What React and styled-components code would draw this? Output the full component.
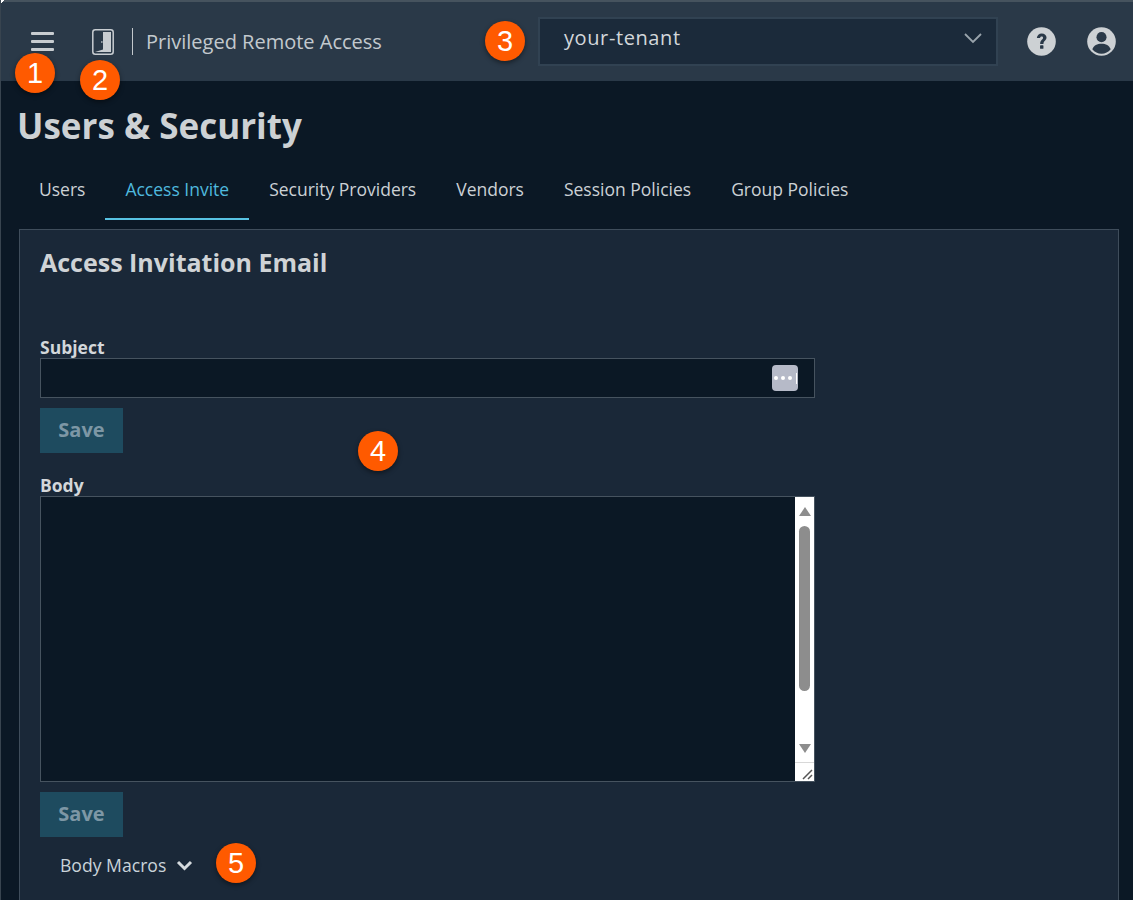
import React from "react";
import styled, { createGlobalStyle } from "styled-components";

const Global = createGlobalStyle`
  html, body { margin: 0; padding: 0; height: 900px; overflow: hidden; background: #0b1826; }
  * { box-sizing: border-box; }
`;

const Page = styled.div`
  position: relative;
  width: 1133px;
  height: 900px;
  overflow: hidden;
  background: #0b1825;
  border-left: 1px solid #38444f;
  font-family: "Open Sans", "Liberation Sans", sans-serif;
  color: #ced3d6;
  &::before {
    content: "";
    position: absolute;
    left: -1px;
    top: 0;
    width: 5px;
    height: 5px;
    background: linear-gradient(135deg, #fff 45%, transparent 50%);
  }
`;

const Header = styled.header`
  display: flex;
  align-items: center;
  height: 81px;
  background: #2a3948;
  border-top: 2px solid #46535e;
  padding-left: 30px;
`;

const MenuButton = styled.div`
  display: flex;
  flex-direction: column;
  gap: 5px;
  width: 23px;
  margin-top: -1px;
  margin-right: 38px;
  span { display: block; height: 3px; background: #c8cdd1; border-radius: 1px; }
`;

const Divider = styled.div`
  width: 1px;
  height: 27px;
  background: #c3c8cc;
  margin: 0 13px 0 18px;
`;

const ProductName = styled.div`
  font-size: 20px;
  color: #c3c9ce;
  width: 392px;
  white-space: nowrap;
`;

const TenantSelect = styled.div`
  display: flex;
  align-items: center;
  justify-content: space-between;
  width: 460px;
  height: 49px;
  margin-top: -1px;
  margin-right: 29px;
  padding: 0 13px 7px 24px;
  background: #1b2a3a;
  border: 2px solid #314252;
  font-size: 20px;
  letter-spacing: 0.6px;
  color: #d3d7da;
`;

const HeaderIcon = styled.svg`
  display: block;
  flex: none;
  margin-right: ${(p) => p.$gap || 0}px;
  margin-top: -1px;
`;

const DoorIcon = styled.svg`
  display: block;
  flex: none;
`;

const Title = styled.h1`
  margin: 0;
  padding: 20px 0 0 16px;
  font-size: 35px;
  line-height: 50px;
  font-weight: 700;
  color: #cdd1d4;
`;

const Tabs = styled.nav`
  display: flex;
  margin: 12px 0 9px 18px;
`;

const Tab = styled.div`
  height: 57px;
  padding: 0 20px 3px;
  display: flex;
  align-items: center;
  font-size: 17.5px;
  color: ${(p) => (p.$active ? "#4fb9de" : "#ccd1d5")};
  border-bottom: 2px solid ${(p) => (p.$active ? "#58c2e2" : "transparent")};
`;

const Panel = styled.section`
  margin-left: 18px;
  width: 1100px;
  height: 700px;
  background: #1a2838;
  border: 1px solid #3f4d5b;
  padding: 14px 20px 0;
`;

const PanelTitle = styled.h2`
  margin: 0 0 56px;
  font-size: 25px;
  line-height: 36px;
  font-weight: 700;
  color: #cfd3d6;
`;

const Label = styled.label`
  display: block;
  font-size: 17.5px;
  line-height: 22px;
  height: 22px;
  margin-top: ${(p) => p.$top || 0}px;
  font-weight: 700;
  color: #d3d7da;
`;

const InputBox = styled.div`
  display: flex;
  justify-content: flex-end;
  align-items: center;
  width: 775px;
  height: 40px;
  padding-right: 16px;
  background: #0b1825;
  border: 1px solid #46535f;
`;

const KeyBadge = styled.div`
  display: flex;
  align-items: center;
  justify-content: center;
  gap: 3px;
  width: 26px;
  height: 26px;
  border-radius: 4px;
  background: #b6bac8;
  i { display: block; width: 4px; height: 4px; border-radius: 50%; background: #fff; }
  b { display: block; width: 1px; height: 11px; background: #fff; margin-left: 1px; }
`;

const SaveButton = styled.div`
  display: flex;
  align-items: center;
  justify-content: center;
  width: 83px;
  height: 45px;
  margin-top: 10px;
  padding-bottom: 2px;
  background: #1e4b5f;
  color: #7d97a5;
  font-size: 20px;
  font-weight: 700;
`;

const TextArea = styled.div`
  display: flex;
  justify-content: flex-end;
  width: 775px;
  height: 286px;
  background: #0b1825;
  border: 1px solid #46535f;
`;

const ScrollBar = styled.div`
  display: flex;
  flex-direction: column;
  align-items: center;
  width: 19px;
  background: #fff;
`;

const Arrow = styled.div`
  width: 0;
  height: 0;
  margin-top: ${(p) => p.$top}px;
  border-left: 6.5px solid transparent;
  border-right: 6.5px solid transparent;
  ${(p) => (p.$down ? "border-top: 9px solid #8d8d8d;" : "border-bottom: 9px solid #8d8d8d;")}
`;

const Thumb = styled.div`
  width: 11px;
  height: 165px;
  margin-top: 10px;
  border-radius: 6px;
  background: #8d8d8d;
`;

const ScrollSpacer = styled.div`
  flex: 1;
`;

const Grip = styled.div`
  width: 100%;
  height: 19px;
  margin-top: 9px;
  border-top: 1px solid #d8d8d8;
  display: flex;
  justify-content: flex-end;
  align-items: flex-end;
`;

const Macros = styled.div`
  display: flex;
  align-items: center;
  gap: 10px;
  margin: 16px 0 0 20px;
  font-size: 17.6px;
  line-height: 24px;
  color: #c9d3da;
`;

const Marker = styled.div`
  position: absolute;
  left: ${(p) => p.$x - 21}px;
  top: ${(p) => p.$y - 20}px;
  display: flex;
  align-items: center;
  justify-content: center;
  width: 40px;
  height: 40px;
  border-radius: 50%;
  background: #ff5a00;
  box-shadow: 0 2px 5px rgba(0, 0, 0, 0.45);
  color: #fff;
  font-family: "Liberation Sans", Arial, sans-serif;
  font-size: 29px;
`;

export default function App() {
  return (
    <Page>
      <Global />
      <Header>
        <MenuButton><span /><span /><span /></MenuButton>
        <DoorIcon width="22" height="26" viewBox="0 0 22 26" fill="none">
          <rect x="0.8" y="0.8" width="20.4" height="24.4" rx="2.5" stroke="#c8cdd1" strokeWidth="1.5" />
          <path d="M11 3 H19 V23 H3 L11 20.5 Z" fill="#c8cdd1" />
          <rect x="9" y="12" width="1.6" height="2" fill="#8f99a1" />
        </DoorIcon>
        <Divider />
        <ProductName>Privileged Remote Access</ProductName>
        <TenantSelect>
          your-tenant
          <svg width="20" height="12" viewBox="0 0 20 12" fill="none">
            <path d="M2 2 L10 10 L18 2" stroke="#9aa4ac" strokeWidth="1.8" />
          </svg>
        </TenantSelect>
        <HeaderIcon $gap={31} width="29" height="29" viewBox="0 0 30 30">
          <circle cx="15" cy="15" r="14.8" fill="#cdd1d4" />
          <path d="M10.2 11.5 C10.4 8.2 12.5 6.6 15.2 6.6 C18.2 6.6 20.2 8.4 20.2 10.9 C20.2 14 17 14.4 17 17.6 H13.6 C13.6 13.6 16.6 13.2 16.6 11.2 C16.6 10.3 16 9.8 15.1 9.8 C14.1 9.8 13.6 10.5 13.5 11.5 Z" fill="#2a3948" />
          <rect x="13.5" y="19" width="3.5" height="3.5" rx="0.6" fill="#2a3948" />
        </HeaderIcon>
        <HeaderIcon width="29" height="29" viewBox="0 0 30 30">
          <circle cx="15" cy="15" r="14.8" fill="#cdd1d4" />
          <circle cx="15" cy="10.5" r="5.2" fill="#2a3948" />
          <path d="M5.5 23 C7 18.6 10.5 17.2 15 17.2 C19.5 17.2 23 18.6 24.5 23 C22 26 18.8 27.6 15 27.6 C11.2 27.6 8 26 5.5 23 Z" fill="#2a3948" />
        </HeaderIcon>
      </Header>
      <Title>Users &amp; Security</Title>
      <Tabs>
        <Tab>Users</Tab>
        <Tab $active>Access Invite</Tab>
        <Tab>Security Providers</Tab>
        <Tab>Vendors</Tab>
        <Tab>Session Policies</Tab>
        <Tab>Group Policies</Tab>
      </Tabs>
      <Panel>
        <PanelTitle>Access Invitation Email</PanelTitle>
        <Label>Subject</Label>
        <InputBox>
          <KeyBadge><i /><i /><i /><b /></KeyBadge>
        </InputBox>
        <SaveButton>Save</SaveButton>
        <Label $top={21}>Body</Label>
        <TextArea>
          <ScrollBar>
            <Arrow $top={10} />
            <Thumb />
            <ScrollSpacer />
            <Arrow $down $top={0} />
            <Grip>
              <svg width="14" height="14" viewBox="0 0 14 14" fill="none">
                <path d="M3 12 L12 3 M8 12 L12 8" stroke="#555" strokeWidth="1.5" />
              </svg>
            </Grip>
          </ScrollBar>
        </TextArea>
        <SaveButton>Save</SaveButton>
        <Macros>
          Body Macros
          <svg width="17" height="11" viewBox="0 0 17 11" fill="none">
            <path d="M2 2 L8.5 8.5 L15 2" stroke="#d5dade" strokeWidth="3" />
          </svg>
        </Macros>
      </Panel>
      <Marker $x={35} $y={73}>1</Marker>
      <Marker $x={100} $y={80}>2</Marker>
      <Marker $x={505} $y={41}>3</Marker>
      <Marker $x={378} $y={451}>4</Marker>
      <Marker $x={236} $y={863}>5</Marker>
    </Page>
  );
}
